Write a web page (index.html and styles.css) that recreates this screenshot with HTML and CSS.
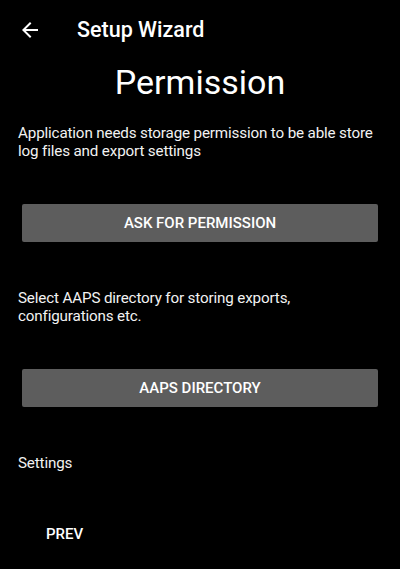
FILE: index.html
```html
<!DOCTYPE html>
<html>
<head>
<meta charset="utf-8">
<link rel="stylesheet" href="styles.css">
</head>
<body>
<header class="toolbar">
  <svg class="back" width="24" height="24" viewBox="0 0 24 24"><path d="M20 11H7.83l5.59-5.59L12 4l-8 8 8 8 1.41-1.41L7.83 13H20v-2z" fill="#fff"/></svg>
  <span class="title">Setup Wizard</span>
</header>
<main class="content">
  <h1 class="heading">Permission</h1>
  <p class="text first">Application needs storage permission to be able store log files and export settings</p>
  <button class="btn btn-one">ASK FOR PERMISSION</button>
  <p class="text second">Select AAPS directory for storing exports, configurations etc.</p>
  <button class="btn btn-two">AAPS DIRECTORY</button>
  <p class="text settings">Settings</p>
  <div class="footer"><span class="prev">PREV</span></div>
</main>
</body>
</html>
```
FILE: styles.css
```css
html, body {
  margin: 0;
  padding: 0;
  background: #000;
  color: #fff;
  font-family: Roboto, "Noto Sans", sans-serif;
}
body {
  width: 400px;
  height: 569px;
  overflow: hidden;
}
.toolbar {
  height: 56px;
  display: flex;
  align-items: center;
  padding-top: 3px;
  box-sizing: border-box;
}
.back {
  margin-left: 18px;
  flex: none;
}
.title {
  margin-left: 35px;
  font-size: 21.5px;
  font-weight: 500;
}
.content {
  display: flex;
  flex-direction: column;
}
.heading {
  margin: 6px 0 0;
  font-size: 34px;
  font-weight: 400;
  text-align: center;
  line-height: normal;
}
.text {
  margin: 0;
  padding: 0 18px;
  font-size: 15.2px;
  letter-spacing: -0.15px;
  line-height: 18px;
  color: #f2f2f2;
}
.first { margin-top: 22px; }
.second { margin-top: 47px; }
.settings { margin-top: 47px; }
.btn {
  margin: 44px 22px 0;
  height: 38px;
  border: none;
  border-radius: 2px;
  background: #5d5d5d;
  color: #fff;
  font-family: Roboto, sans-serif;
  font-size: 15px;
  font-weight: 500;
  padding: 0;
}
.footer {
  margin-top: 52px;
  padding-left: 46px;
}
.prev {
  font-size: 15px;
  font-weight: 500;
}
```
